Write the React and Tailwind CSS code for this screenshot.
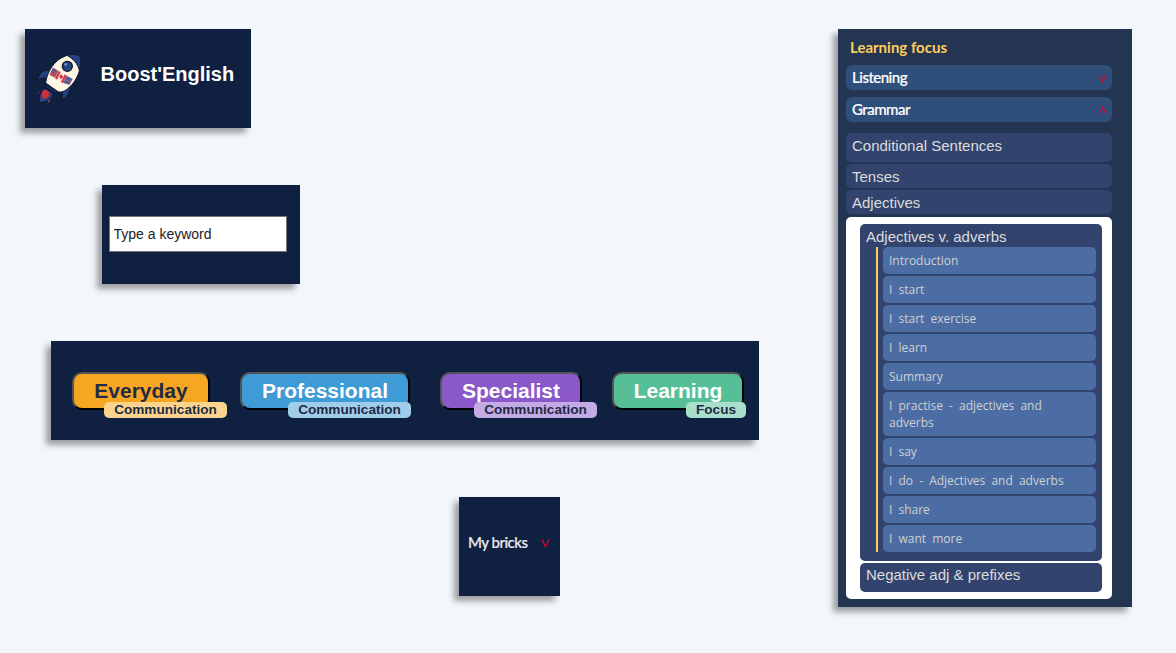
const lessons = [
  'Introduction',
  'I start',
  'I start exercise',
  'I learn',
  'Summary',
  'I practise - adjectives and adverbs',
  'I say',
  'I do - Adjectives and adverbs',
  'I share',
  'I want more',
];

const categories = [
  { title: 'Everyday', sub: 'Communication', box: 'w-[138px] mr-[30px] bg-[#f6a623] text-[#1f2a44]', tag: 'w-[123px] left-[30px] bg-[#fbd38d]' },
  { title: 'Professional', sub: 'Communication', box: 'w-[170px] mr-[30px] bg-[#3f9bd5] text-white', tag: 'w-[123px] left-[46px] bg-[#9fcdea]' },
  { title: 'Specialist', sub: 'Communication', box: 'w-[142px] mr-[30px] bg-[#8a58c8] text-white', tag: 'w-[123px] left-[32px] bg-[#c5abe4]' },
  { title: 'Learning', sub: 'Focus', box: 'w-[132px] bg-[#56bf98] text-white', tag: 'w-[60px] left-[72px] bg-[#aadfcc]' },
];

const shadow = 'shadow-[-5px_5px_6px_rgba(0,0,0,0.36)]';

function Rocket() {
  return (
    <svg width="56" height="60" viewBox="0 0 168 180" className="shrink-0">
      <g stroke="#0d1730" strokeWidth="3" strokeLinejoin="round">
        <path d="M52 66 C32 65 20 77 17 97 C29 89 40 88 50 92 Z" fill="#24427f" />
        <path d="M114 108 C117 128 110 144 90 156 C94 140 89 129 92 120 Z" fill="#24427f" />
        <path d="M43 110 L74 130 L69 137 L40 117 Z" fill="#18305f" />
        <path d="M39 121 L63 135 C64 149 54 160 22 165 C18 145 26 129 39 121 Z" fill="#24427f" />
        <path d="M41 105 C44 74 66 36 100 24 C116 18 135 19 144 24 C151 57 137 100 107 122 C98 130 87 134 78 131 Z" fill="#fff5e3" />
        <path d="M105 22 C120 17 137 20 144 24 C148 40 147 53 142 66 C136 46 124 33 105 22 Z" fill="#24427f" />
        <circle cx="106" cy="55" r="15" fill="#24427f" strokeWidth="4" />
      </g>
      <path d="M63 59 L80 69 L69 89 L52 80 Z" fill="#b0505c" />
      <path d="M63 59 L73 65 L66 77 L57 72 Z" fill="#5d5f8c" />
      <path d="M80 69 L103 82 L92 106 L69 91 Z" fill="#fbe3d8" />
      <path d="M80 69 L86 72 L75 95 L69 91 Z M98 79 L104 83 L93 106 L87 102 Z" fill="#cf3a44" />
      <path d="M82 84 L88 79 L93 87 L86 94 Z" fill="#d22b35" />
      <path d="M104 83 L122 93 L112 110 L94 105 Z" fill="#4a5c93" />
      <path d="M99 94 L117 103" stroke="#c4606a" strokeWidth="3" />
      <path d="M34 127 C46 124 53 132 52 141 C50 149 41 151 32 153 C29 142 29 133 34 127 Z" fill="#cf3037" />
      <path d="M17 135 L22 132 M47 156 L53 160 M47 164 L56 156" stroke="#b33a4d" strokeWidth="3" />
      <circle cx="101" cy="49" r="4" fill="#7b9bc3" />
    </svg>
  );
}

function Chevron({ up = false }) {
  return (
    <svg width="9" height="9" viewBox="0 0 9 9" className={up ? 'mt-px shrink-0' : 'mt-[2px] shrink-0'} fill="none" stroke="#cf0c36" strokeWidth="1.2">
      <path d={up ? 'M1 8.2 L4.5 .8 L8 8.2' : 'M1 .6 L4.5 8 L8 .6'} />
    </svg>
  );
}

function Accordion({ label, up }) {
  return (
    <div className="flex h-[25px] items-center justify-between rounded-md bg-[#304e7a] pr-[5px] pl-[6px] font-['Lato',sans-serif] text-[15px] font-medium text-white">
      <span className="tracking-[-0.5px] [-webkit-text-stroke:0.2px]">{label}</span>
      <Chevron up={up} />
    </div>
  );
}

export default function App() {
  return (
    <main className="flex h-[653px] w-[1176px] items-start overflow-hidden bg-[#f3f6fb] pt-[29px] font-['Liberation_Sans',Arial,sans-serif]">
      <div className="flex w-[838px] shrink-0 flex-col gap-[57px]">
        <header className={`ml-[25px] flex h-[99px] w-[226px] bg-[#102041] pt-[19px] pl-[7px] ${shadow}`}>
          <Rocket />
          <h1 className="mt-[11px] ml-[12.5px] text-[20px] leading-[30px] font-bold whitespace-nowrap text-white">Boost'English</h1>
        </header>

        <section className={`ml-[102px] h-[99px] w-[198px] bg-[#102041] pt-[31px] pl-[7px] ${shadow}`}>
          <input
            aria-label="Keyword"
            placeholder="Type a keyword"
            className="block h-[36px] w-[178px] border border-[#767676] bg-white px-[3.5px] text-[14px] text-[#222] placeholder:text-[#222]"
          />
        </section>

        <nav className={`ml-[51px] flex h-[99px] w-[708px] bg-[#102041] pt-[31px] pl-[21px] ${shadow}`}>
          {categories.map((c) => (
            <button key={c.title} className={`relative h-[38px] rounded-[10px] border-2 [border-style:outset] border-black text-[21px] leading-[34px] font-bold ${c.box}`}>
              {c.title}
              <span className={`absolute top-[28px] h-[16px] rounded-[5px] text-center text-[13.6px] leading-[15px] font-bold text-[#1f2a44] ${c.tag}`}>
                {c.sub}
              </span>
            </button>
          ))}
        </nav>

        <section className={`ml-[459px] flex h-[99px] w-[101px] items-center bg-[#102041] pr-[10px] pb-[8px] pl-[9px] font-['Lato',sans-serif] text-[15px] font-medium text-[#e8eaf0] ${shadow}`}>
          <span className="flex-1 tracking-[-0.5px] whitespace-nowrap [-webkit-text-stroke:0.2px]">My bricks</span>
          <Chevron />
        </section>
      </div>

      <aside className={`h-[578px] w-[294px] shrink-0 bg-[#243552] pt-[8px] pr-[20px] pl-[8px] ${shadow}`}>
        <h2 className="mb-[6px] h-[22px] pl-[4px] font-['Lato',sans-serif] text-[15px] leading-[21px] font-bold text-[#ffcd5b]">Learning focus</h2>
        <div className="flex flex-col gap-[7px]">
          <Accordion label="Listening" />
          <Accordion label="Grammar" up />
        </div>
        <ul className="mt-[11px] flex flex-col gap-[2px] text-[15px] text-[#dcdcdc]">
          <li className="h-[29px] rounded-[5px] bg-[#32446e] pl-[6px] leading-[26px]">Conditional Sentences</li>
          <li className="h-[24px] rounded-[5px] bg-[#32446e] pl-[6px] leading-[26px]">Tenses</li>
          <li className="h-[24px] rounded-[5px] bg-[#32446e] pl-[6px] leading-[26px]">Adjectives</li>
        </ul>
        <div className="mt-[3px] flex h-[382px] flex-col gap-[2px] rounded-[5px] bg-white pt-[7px] pr-[10px] pl-[14px] text-[15px] text-[#dcdcdc]">
          <div className="h-[337px] rounded-[5px] bg-[#32446e] pr-[6px] pl-[6px]">
            <h3 className="h-[23px] leading-[26px]">Adjectives v. adverbs</h3>
            <ul className="ml-[10px] flex flex-col gap-[2px] border-l-2 border-[#ffcd5b] pl-[5px] font-['Open_Sans',sans-serif] text-[12px] leading-[17px] text-[#cfd0d2] [word-spacing:3px]">
              {lessons.map((l) => (
                <li key={l} className="rounded-[5px] bg-[#4b6da3] px-[6px] py-[5px]">{l}</li>
              ))}
            </ul>
          </div>
          <div className="h-[29px] rounded-[5px] bg-[#32446e] pl-[6px] leading-[23px]">Negative adj &amp; prefixes</div>
        </div>
      </aside>
    </main>
  );
}
